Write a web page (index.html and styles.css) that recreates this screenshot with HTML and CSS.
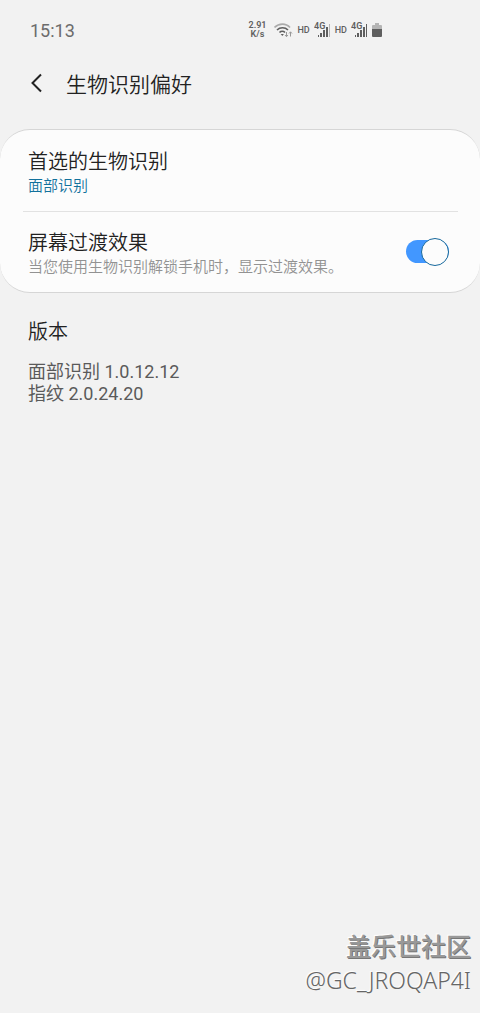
FILE: index.html
```
<!DOCTYPE html>
<html lang="zh-CN">
<head>
<meta charset="utf-8">
<meta name="viewport" content="width=device-width, initial-scale=1">
<title>生物识别偏好</title>
<link rel="stylesheet" href="styles.css">
</head>
<body>
<div class="statusbar">
  <time class="clock">15:13</time>
  <div class="indicators">
    <span class="speed">2.91<br>K/s</span>
    <svg class="wifi" width="19" height="16" viewBox="0 0 19 16" fill="none">
      <path d="M.500 5.500C5 1 12 1 16 5.500" stroke="#aaa" stroke-width="1.600"/>
      <path d="M3 8C6 5 11 5 14 8M5.500 10.500c1.500-1.500 4-1.500 5.500 0" stroke="#5f5f5f" stroke-width="1.600"/>
      <path d="M6.700 12h3.200l-1.600 2z" fill="#5f5f5f"/>
      <path d="M12.500 10v4.500M11 13l1.500 1.700 1.500-1.700M16.500 14.500V10M15 11.500l1.500-1.700 1.500 1.700" stroke="#999"/>
    </svg>
    <span class="hd">HD</span>
    <svg class="signal" width="17" height="16" viewBox="0 0 17 16">
      <path d="M4 13h1v2H4zM6 11h2v4H6zM9 8h2v7H9zM12 5h2v10h-2z" fill="#5f5f5f"/>
      <path d="M15 2h1v13h-1z" fill="#b5b5b5"/>
      <text class="net" x="0" y="7">4G</text>
    </svg>
    <span class="hd">HD</span>
    <svg class="signal" width="17" height="16" viewBox="0 0 17 16">
      <path d="M4 13h1v2H4zM6 11h2v4H6zM9 8h2v7H9zM12 5h2v10h-2zM15 2h1v13h-1z" fill="#5f5f5f"/>
      <text class="net" x="0" y="7">4G</text>
    </svg>
    <svg class="battery" width="10" height="14" viewBox="0 0 10 14">
      <path d="M3 0h4v2h2q1 0 1 1v4H0V3q0-1 1-1h2z" fill="#b5b5b5"/>
      <path d="M0 6h10v7q0 1-1 1H1q-1 0-1-1z" fill="#5f5f5f"/>
    </svg>
  </div>
</div>

<header class="appbar">
  <button class="back" type="button" aria-label="返回">
    <svg width="12" height="20" viewBox="0 0 12 20" fill="none"><path d="M11 1.500L2.500 10l8.500 8.500" stroke="#222" stroke-width="2"/></svg>
  </button>
  <h1 class="title">生物识别偏好</h1>
</header>

<main class="content">
  <section class="card">
    <button class="row" type="button">
      <span class="label">首选的生物识别</span>
      <span class="value">面部识别</span>
    </button>
    <div class="row row-switch">
      <label class="texts" for="transition">
        <span class="label">屏幕过渡效果</span>
        <span class="hint">当您使用生物识别解锁手机时，显示过渡效果。</span>
      </label>
      <input class="switch" id="transition" type="checkbox" role="switch" checked>
    </div>
  </section>
  <section class="versions">
    <h2 class="label">版本</h2>
    <p class="version">面部识别 1.0.12.12<br>指纹 2.0.24.20</p>
  </section>
</main>

<footer class="watermark">
  <span class="community">盖乐世社区</span>
  <span class="user">@GC_JROQAP4I</span>
</footer>
</body>
</html>
```

FILE: styles.css
```
* {
  box-sizing: border-box;
}

body {
  margin: 0;
  min-height: 100vh;
  display: flex;
  flex-direction: column;
  background: #f2f2f2;
  color: #222;
  font-family: Roboto, "Noto Sans CJK SC", sans-serif;
}

button {
  border: 0;
  padding: 0;
  background: none;
  color: inherit;
  font: inherit;
  text-align: left;
}

.statusbar {
  display: flex;
  justify-content: space-between;
  align-items: center;
  height: 60px;
  padding: 0 98px 0 30px;
}

.clock {
  color: #6c6c6c;
  font-size: 18px;
}

.indicators {
  display: flex;
  align-items: center;
  gap: 4px;
  color: #5f5f5f;
}

.speed {
  margin-right: 4px;
  font-size: 9px;
  font-weight: 600;
  line-height: 9px;
  text-align: center;
}

.hd {
  font-size: 9px;
  font-weight: 500;
}

.net {
  font-size: 9px;
  font-weight: 600;
  fill: #5f5f5f;
}

.appbar {
  display: flex;
  align-items: center;
  gap: 24px;
  height: 46px;
  padding: 0 30px;
}

.back {
  display: flex;
}

.title {
  margin: 0;
  font-size: 21px;
  font-weight: 350;
}

.content {
  padding-top: 23px;
}

.card {
  border: solid #d6d6d6;
  border-width: 1px 0;
  border-radius: 30px;
  background: #fcfcfc;
}

.row {
  display: flex;
  flex-direction: column;
  width: 100%;
  height: 81px;
  padding: 18px 28px 0;
}

.row-switch {
  position: relative;
  flex-direction: row;
  align-items: flex-start;
  justify-content: space-between;
  padding-right: 31px;
}

.row-switch::before {
  content: "";
  position: absolute;
  top: 0;
  left: 23px;
  right: 22px;
  border-top: 1px solid #e2e2e2;
}

.texts {
  display: flex;
  flex-direction: column;
}

.label {
  margin: 0;
  font-size: 20px;
  font-weight: 350;
  line-height: 28px;
}

.value,
.hint {
  font-size: 15px;
  font-weight: 350;
  line-height: 20px;
}

.value {
  color: #12719c;
}

.hint {
  color: #929292;
}

.switch {
  appearance: none;
  position: relative;
  flex: none;
  width: 43px;
  height: 23px;
  margin: 11px 0 0;
  border-radius: 12px;
  background: #4297ff;
}

.switch::before {
  content: "";
  position: absolute;
  top: -2px;
  right: 0;
  width: 26px;
  height: 26px;
  border: 1px solid #16689c;
  border-radius: 50%;
  background: #fcfcfc;
}

.switch:not(:checked) {
  background: #bbb;
}

.switch:not(:checked)::before {
  right: auto;
  left: 0;
}

.versions {
  padding: 25px 28px;
}

.version {
  margin: 15px 0 0;
  color: #5a5a5a;
  font-size: 18px;
  line-height: 22px;
}

.watermark {
  display: flex;
  flex-direction: column;
  align-items: flex-end;
  margin-top: auto;
  padding: 0 9px 16px;
  color: #666;
  text-shadow: -1px -1px 1px #fff;
}

.community {
  color: #999;
  font-size: 25px;
  font-weight: 500;
  line-height: 30px;
  text-shadow: 1px 1px 0 #777, -1px -1px 1px #fff;
}

.user {
  font-family: "Noto Sans", sans-serif;
  font-size: 23px;
  font-weight: 300;
  line-height: 34px;
}
```
